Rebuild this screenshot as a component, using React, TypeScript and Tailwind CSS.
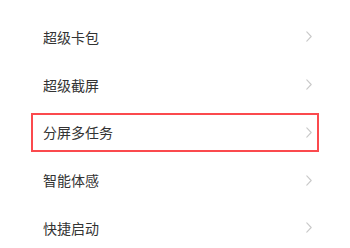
const items = ['超级卡包', '超级截屏', '分屏多任务', '智能体感', '快捷启动'];

function Chevron() {
  return (
    <svg width="6" height="11" viewBox="0 0 6 11" fill="none">
      <path d="M0.8 0.8 L5.2 5.5 L0.8 10.2" stroke="#c9c9c9" strokeWidth="1.1" strokeLinecap="round" strokeLinejoin="round" />
    </svg>
  );
}

export default function App() {
  return (
    <div
      className="w-[350px] h-[248px] bg-white overflow-hidden pt-[13px] px-[31px]"
      style={{ fontFamily: '"Noto Sans CJK SC", "Noto Sans", sans-serif' }}
    >
      {items.map((label, i) => (
        <div key={label} className="h-[47.75px] flex items-center">
          <div
            className={`w-full h-[39px] flex items-center justify-between pl-[10px] pr-[5px] border-2 ${
              i === 2 ? 'border-[#fb4a4e]' : 'border-transparent'
            }`}
          >
            <span className="text-[14px] leading-none text-[#333333]">{label}</span>
            <Chevron />
          </div>
        </div>
      ))}
    </div>
  );
}
